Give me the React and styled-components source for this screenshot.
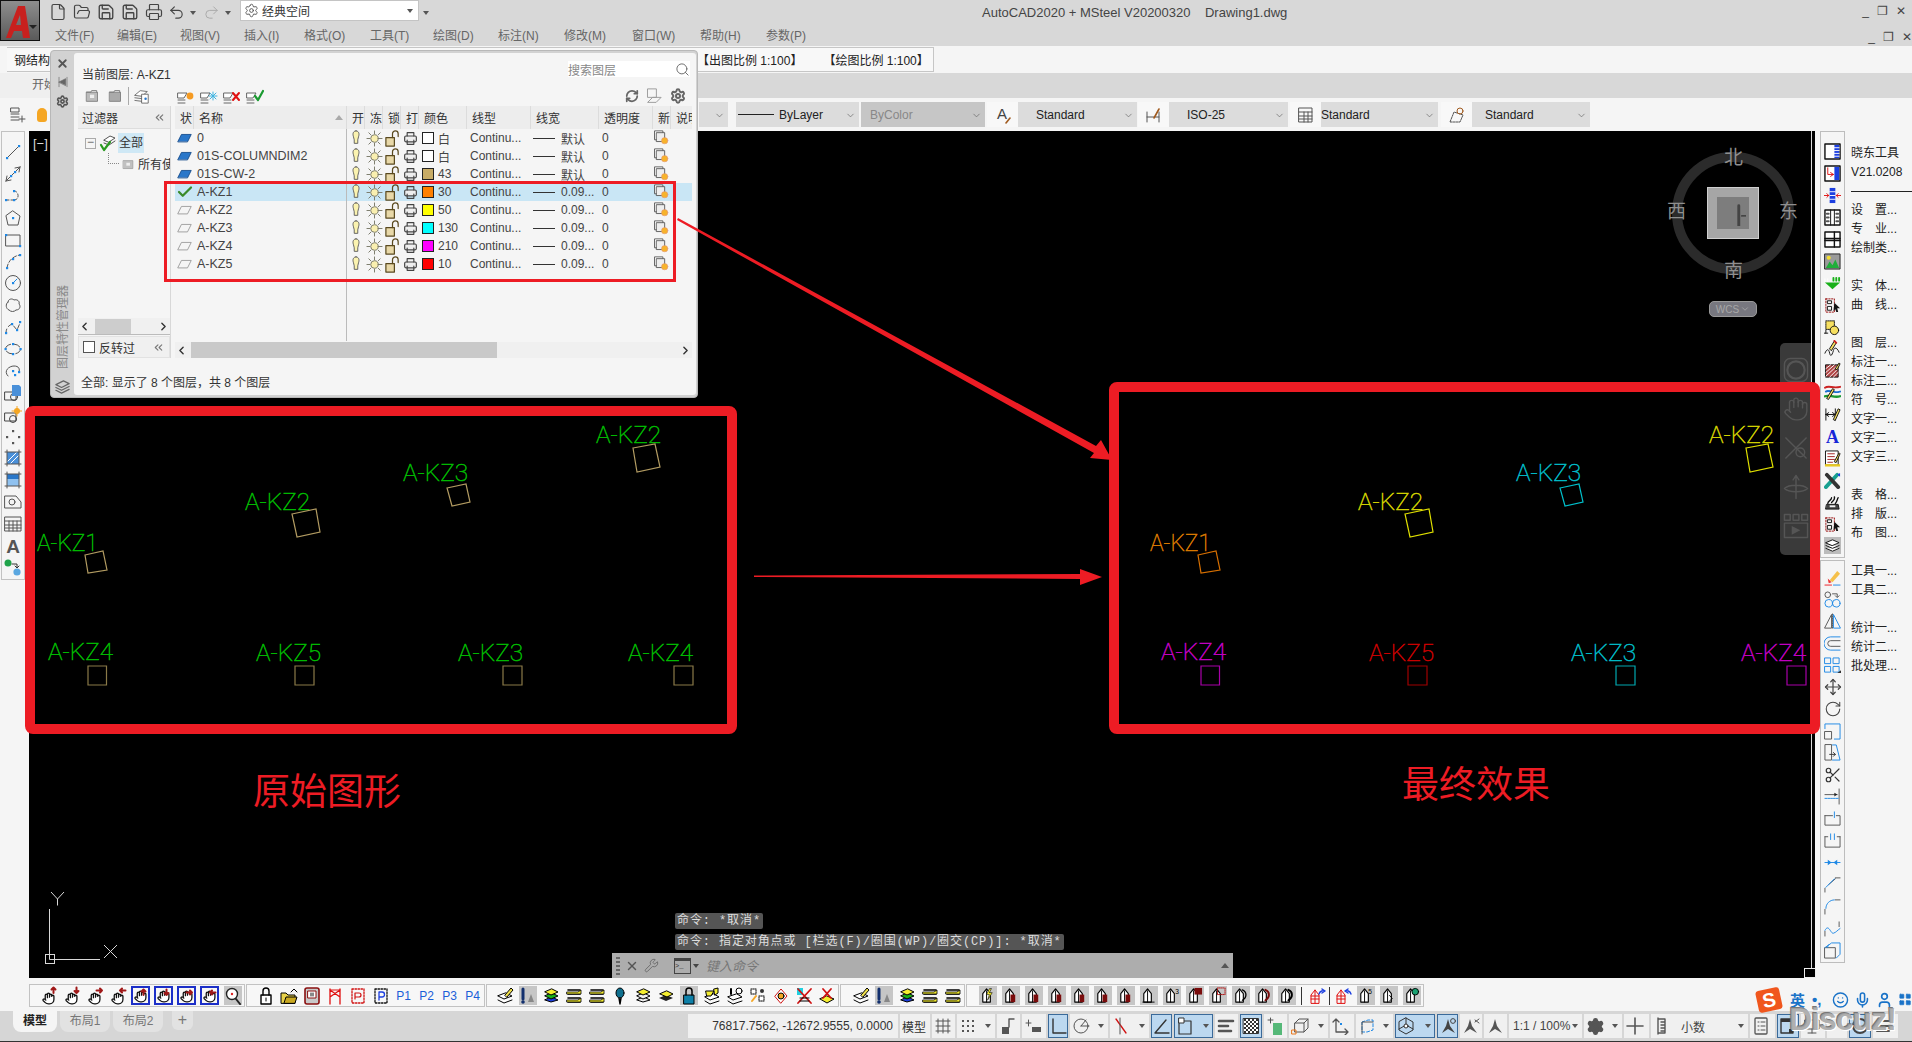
import React from "react";
import styled, { createGlobalStyle } from "styled-components";
import { File, FolderOpen, Save, Printer, Undo2, Redo2, Settings, Search, RefreshCw, Hand, Smile, Mic, User, LayoutGrid, Move, RotateCw, Scissors, Wrench, X, ChevronDown, ChevronsLeft, ChevronLeft, ChevronRight, Check } from "lucide-react";

const GlobalStyle = createGlobalStyle`
  html, body { margin: 0; padding: 0; background: #f5f5f5; }
  body { font-family: "Liberation Sans", "Noto Sans CJK SC", sans-serif; font-size: 12px; color: #333; }
`;

const RED = "#ed1c24";

const Page = styled.div`
  position: relative;
  width: 1912px;
  height: 1042px;
  overflow: hidden;
  display: flex;
  flex-direction: column;
  background: #f5f5f5;
`;

const TopBar = styled.div`
  display: flex;
  height: 45px;
  background: #d8d8d8;
`;

const Logo = styled.div`
  position: relative;
  width: 40px;
  height: 41px;
  flex: none;
  background: linear-gradient(#8e8e8e, #5a5a5a);
  border: 1px solid #111;
  box-sizing: border-box;
  overflow: hidden;
`;

const LogoCaret = styled.i`
  position: absolute;
  right: 2px;
  top: 24px;
  border: 4px solid transparent;
  border-top-color: #222;
`;

const TopStack = styled.div`
  position: relative;
  flex: 1;
  display: flex;
  flex-direction: column;
`;

const QuickRow = styled.div`
  display: flex;
  align-items: center;
  height: 24px;
  padding-left: 6px;
`;

const QuickIcon = styled.span`
  display: inline-flex;
  justify-content: center;
  width: ${(p) => p.$w || 24}px;
  color: #444;
`;

const MiniCaret = styled.i`
  flex: none;
  width: 0;
  height: 0;
  margin: 4px 5px 0 4px;
  border: 3px solid transparent;
  border-top: 4px solid #555;
`;

const WorkspaceBox = styled.div`
  display: flex;
  align-items: center;
  gap: 3px;
  width: 179px;
  height: 21px;
  margin-left: 4px;
  margin-top: -3px;
  padding-left: 3px;
  box-sizing: border-box;
  background: #fff;
  border: 1px solid #c4c4c4;
  color: #333;
  font-size: 12px;

  span { flex: 1; }
`;

const AppTitle = styled.div`
  margin-left: 548px;
  font-size: 13px;
  color: #444;
  white-space: nowrap;
`;

const WinButtons = styled.div`
  position: absolute;
  right: ${(p) => (p.$low ? "0" : "6px")};
  top: ${(p) => (p.$low ? "6px" : "4px")};
  display: flex;
  gap: 8px;
  font-size: 12px;
  color: #444;
`;

const MenuRow = styled.div`
  position: relative;
  height: 21px;
`;

const MenuItem = styled.span`
  position: absolute;
  left: ${(p) => p.$x - 40}px;
  top: 2px;
  font-size: 12px;
  color: #666;
`;

const ScaleRow = styled.div`
  height: 28px;
  padding: 1px 0;
  box-sizing: border-box;
  background: #f5f5f5;
  border-top: 1px solid #d8d8d8;
`;

const ScaleBox = styled.div`
  display: flex;
  align-items: center;
  width: 927px;
  height: 25px;
  margin-left: 7px;
  padding-left: 7px;
  box-sizing: border-box;
  border: 1px solid #c6c6c6;
  border-width: 1px 1px 1px 0;
  background: #f8f8f8;
  color: #222;
  font-size: 12px;
`;

const ScaleText = styled.span`
  margin-left: ${(p) => (p.$gap ? "21px" : "647px")};
  white-space: nowrap;
  font-size: 12px;
`;

const TabRow = styled.div`
  height: 25px;
  background: #d8d8d8;
`;

const StartTab = styled.div`
  width: 64px;
  height: 25px;
  line-height: 25px;
  padding-left: 32px;
  box-sizing: border-box;
  background: #efefef;
  border-radius: 0 0 10px 0;
  color: #666;
  white-space: nowrap;
`;

const PropsRow = styled.div`
  display: flex;
  align-items: center;
  height: 33px;
  background: #f5f5f5;
`;

const PropIconLeft = styled.div`
  margin-left: 10px;
  display: flex;
`;

const Bulb = styled.i`
  width: 10px;
  height: 14px;
  margin-left: 9px;
  background: #f5a623;
  border-radius: 5px 5px 3px 3px;
`;

const PropCombo = styled.div`
  display: flex;
  align-items: center;
  position: relative;
  width: ${(p) => p.$w}px;
  height: 25px;
  margin-left: ${(p) => p.$ml || 0}px;
  background: ${(p) => (p.$off ? "#c6c6c6" : "#dcdcdc")};
  flex: none;
`;

const Caret = styled(ChevronDown).attrs({ size: 11, strokeWidth: 1.5 })`
  position: absolute;
  right: 3px;
  top: 8px;
  color: #666;
`;

const LineSample = styled.i`
  width: 36px;
  height: 1px;
  margin-left: 2px;
  background: #222;
`;

const PropText = styled.span`
  margin-left: ${(p) => p.$pad ?? 5}px;
  color: ${(p) => (p.$off ? "#888" : "#222")};
  font-size: 12px;
`;

const PropTool = styled.div`
  display: flex;
  align-items: center;
  justify-content: center;
  width: 31px;
  height: 25px;
  margin-left: ${(p) => p.$ml || 2}px;
  background: #f8f8f8;
  flex: none;
`;

const Main = styled.div`
  display: flex;
  height: 847px;
  flex: none;
`;

const LeftTools = styled.div`
  flex: none;
  align-self: flex-start;
  width: 24px;
  margin: 0 4px 0 1px;
  border: 1px solid #c2c2c2;
  box-sizing: border-box;
  padding: 9px 0 0;
  height: 449px;
`;

const LeftCell = styled.div`
  display: flex;
  align-items: center;
  justify-content: center;
  height: 21.9px;
`;

const Canvas = styled.div`
  position: relative;
  flex: none;
  width: 1786px;
  height: 847px;
  background: #000;
`;

const CanvasTag = styled.div`
  position: absolute;
  left: 4px;
  top: 5px;
  color: #d8d8d8;
  font-size: 13px;
`;

const DrawingSvg = styled.svg`
  position: absolute;
  inset: 0;
  width: 100%;
  height: 100%;
`;

const Compass = styled.div`
  position: absolute;
  left: 1643px;
  top: 15px;
  width: 122px;
  height: 180px;
`;

const Ring = styled.div`
  position: absolute;
  left: 0;
  top: 6px;
  width: 122px;
  height: 122px;
  box-sizing: border-box;
  border: 10px solid #2b2b2b;
  border-radius: 50%;
`;

const ViewCube = styled.div`
  position: absolute;
  left: 35px;
  top: 41px;
  width: 52px;
  height: 52px;
  box-sizing: border-box;
  display: flex;
  align-items: center;
  justify-content: center;
  background: #a6a6a6;
  border: 1px solid #cfcfcf;
`;

const ViewFace = styled.div`
  width: 32px;
  height: 32px;
  display: flex;
  align-items: center;
  justify-content: center;
  background: #7d7d7d;
`;

const Dir = styled.span`
  position: absolute;
  left: ${(p) => p.$x}px;
  top: ${(p) => p.$y}px;
  font-size: 19px;
  line-height: 24px;
  color: #8f8f8f;
`;

const WcsPill = styled.div`
  position: absolute;
  left: 37px;
  top: 155px;
  width: 48px;
  height: 16px;
  box-sizing: border-box;
  display: flex;
  align-items: center;
  justify-content: center;
  gap: 1px;
  background: #77777f;
  border: 1px solid #9a9a9a;
  border-radius: 5px;
  color: #a8a8a8;
  font-size: 10px;
`;

const NavBar = styled.div`
  position: absolute;
  left: 1751px;
  top: 212px;
  width: 31px;
  height: 212px;
  box-sizing: border-box;
  padding-top: 14px;
  background: #3a3a3a;
  border-radius: 5px 0 0 5px;
  display: flex;
  flex-direction: column;
  gap: 13px;
`;

const NavGlyph = styled.div`
  display: flex;
  justify-content: center;
`;

const HistoryStack = styled.div`
  position: absolute;
  left: 646px;
  top: 782px;
  display: flex;
  flex-direction: column;
  align-items: flex-start;
  gap: 5px;
`;

const HistoryLine = styled.div`
  height: 16px;
  line-height: 16px;
  padding: 0 2px;
  background: #555;
  border-radius: 2px;
  color: #ddd;
  font-family: "Liberation Mono", "Noto Sans CJK SC", monospace;
  font-size: 12px;
  letter-spacing: 0.9px;
  white-space: pre;
`;

const CommandBar = styled.div`
  position: absolute;
  left: 583px;
  top: 822px;
  width: 621px;
  height: 25px;
  display: flex;
  align-items: center;
  gap: 5px;
  padding-left: 4px;
  box-sizing: border-box;
  background: #adadad;
`;

const Grip = styled.i`
  width: 4px;
  height: 18px;
  background: repeating-linear-gradient(#666 0 2px, transparent 2px 4px);
`;

const ConsoleBox = styled.span`
  width: 15px;
  height: 12px;
  margin-left: 10px;
  border: 1px solid #444;
  border-top-width: 3px;
  font-family: "Liberation Mono", monospace;
  font-size: 7px;
  line-height: 10px;
  color: #333;
`;

const CmdCaret = styled.i`
  width: 0;
  margin-left: -3px;
  border: 3px solid transparent;
  border-top: 4px solid #444;
  margin-top: 4px;
`;

const CmdHint = styled.span`
  margin-left: 2px;
  font-style: italic;
  font-size: 13px;
  color: #777;
`;

const UpCaret = styled.i`
  margin-left: auto;
  margin-right: 4px;
  border: 4px solid transparent;
  border-top: 0;
  border-bottom: 5px solid #555;
`;

const CanvasCorner = styled.i`
  position: absolute;
  right: -1px;
  bottom: 0;
  width: 10px;
  height: 8px;
  background: #000;
  border: 1px solid #eee;
`;

const RightPanel = styled.div`
  flex: 1;
  display: flex;
  min-width: 0;
  padding-left: 5px;
`;

const RightTools = styled.div`
  flex: none;
  width: 25px;
`;

const RightBar = styled.div`
  border: 1px solid #bdbdbd;
  box-sizing: border-box;
  padding: ${(p) => p.$pt}px 0 ${(p) => p.$pb}px;
  margin-top: ${(p) => p.$mt || 0}px;
`;

const RightCell = styled.div`
  display: flex;
  align-items: center;
  justify-content: center;
  height: 21.9px;
`;

const LabelColumn = styled.div`
  padding: 13px 0 0 6px;
  flex: 1;
  min-width: 0;
`;

const PanelLabel = styled.div`
  height: 19px;
  line-height: 19px;
  white-space: pre;
  font-size: 12px;
  color: #222;
`;

const LabelRule = styled.div`
  height: 19px;
  box-sizing: border-box;
  border-bottom: 1px solid #222;
  transform: translateY(-9px);
`;

const BottomBar = styled.div`
  display: flex;
  flex: none;
  height: 33px;
  padding-top: 6px;
  box-sizing: border-box;
  gap: 1px;
`;

const IconGroup = styled.div`
  display: flex;
  align-items: center;
  height: 23px;
  padding-left: ${(p) => p.$pl}px;
  margin-left: ${(p) => (p.$first ? "29px" : "0")};
  border: 1px solid #c2c2c2;
  box-sizing: border-box;
  background: #f7f7f7;
`;

const BarCell = styled.div`
  display: flex;
  align-items: center;
  justify-content: center;
  width: 23px;
  height: 21px;
  flex: none;
`;

const BarDivider = styled.i`
  width: 1px;
  height: 18px;
  background: #333;
  margin: 0 ${(p) => p.$m}px;
  flex: none;
`;

const GloveWrap = styled.div`
  position: relative;
  display: flex;
  align-items: flex-end;
  justify-content: center;
  width: 19px;
  height: 19px;
  box-sizing: border-box;
  border: ${(p) => (p.$boxed ? "2px solid #1c2fc8" : "0")};

  svg:last-child {
    position: absolute;
    top: 0;
    right: 0;
  }
`;

const GrayChip = styled.div`
  display: flex;
  align-items: center;
  justify-content: center;
  width: 18px;
  height: 19px;
  background: #c6c6c6;
`;

const PLabel = styled.span`
  color: #1a5fd8;
  font-size: 12px;
`;

const StatusBar = styled.div`
  display: flex;
  flex: none;
  align-items: flex-start;
  height: 30px;
  background: #d6d6d6;
`;

const Tabs = styled.div`
  display: flex;
  width: 688px;
  flex: none;
  padding-left: 13px;
  box-sizing: border-box;
  gap: 3px;
`;

const LayoutTab = styled.div`
  width: ${(p) => (p.$active ? "44px" : "50px")};
  height: 21px;
  line-height: 21px;
  text-align: center;
  background: ${(p) => (p.$active ? "#f5f5f5" : "#e2e2e2")};
  border-radius: 0 0 8px 8px;
  color: ${(p) => (p.$active ? "#222" : "#777")};
  font-weight: ${(p) => (p.$active ? 700 : 400)};
`;

const AddTab = styled.div`
  width: 21px;
  height: 19px;
  line-height: 17px;
  margin-left: 6px;
  text-align: center;
  background: #e2e2e2;
  border-radius: 0 0 6px 6px;
  color: #777;
  font-size: 16px;
`;

const CoordTile = styled.div`
  width: 210px;
  height: 24px;
  margin-top: 3px;
  line-height: 24px;
  flex: none;
  text-align: right;
  padding-right: 5px;
  box-sizing: border-box;
  background: #f0f0f0;
  color: #333;
`;

const TileRow = styled.div`
  display: flex;
  gap: 2px;
  margin: 3px 0 0 2px;
`;

const Tile = styled.div`
  position: relative;
  flex: none;
  display: flex;
  align-items: center;
  justify-content: flex-start;
  padding-left: 2px;
  box-sizing: border-box;
  width: ${(p) => p.$w}px;
  height: 24px;
  background: ${(p) => (p.$hl ? "#bcd8f0" : "#f0f0f0")};
  box-shadow: ${(p) => (p.$hl ? "inset 0 0 0 1px #3a6a9a" : "none")};
  color: #333;
  white-space: nowrap;
  overflow: hidden;
`;

const TileCaret = styled.i`
  position: absolute;
  right: 4px;
  top: 10px;
  border: 3px solid transparent;
  border-top: 4px solid #555;
`;

const ScaleLabel = styled.span`
  margin-left: 2px;
  color: #444;
  font-size: 12px;
`;

const UnitsLabel = styled.span`
  margin-left: 10px;
  color: #444;
`;

const Baseline = styled.div`
  flex: 1;
  background: #333;
`;

const Dialog = styled.div`
  position: absolute;
  left: 50px;
  top: 50px;
  width: 648px;
  height: 348px;
  display: flex;
  background: #d2d2d2;
  border: 1px solid #b8b8b8;
  border-radius: 4px;
  box-sizing: border-box;
  z-index: 2;
`;

const DialogStrip = styled.div`
  flex: none;
  width: 23px;
  padding-top: 5px;
  display: flex;
  flex-direction: column;
  align-items: center;
  gap: 5px;
`;

const StripIcon = styled.div`
  display: flex;
  height: 14px;
  align-items: center;
  color: #555;
  margin-top: ${(p) => (p.$end ? "5px" : "0")};
  margin-bottom: ${(p) => (p.$end ? "4px" : "0")};
`;

const StripTitle = styled.div`
  margin-top: auto;
  writing-mode: vertical-rl;
  text-orientation: sideways;
  transform: rotate(180deg);
  color: #8a8a8a;
  font-size: 12px;
  line-height: 14px;
  white-space: nowrap;
`;

const DialogBody = styled.div`
  flex: 1;
  display: flex;
  flex-direction: column;
  margin: 2px 1px 2px 0;
  background: #f5f5f5;
  border-radius: 3px;
  padding: 0 4px;
  min-width: 0;
`;

const DialogHead = styled.div`
  display: flex;
  align-items: center;
  justify-content: space-between;
  height: 32px;
  padding-left: 4px;
`;

const CurrentLayer = styled.span`
  margin-top: 8px;
  color: #333;
`;

const SearchBox = styled.div`
  display: flex;
  align-items: center;
  justify-content: space-between;
  width: 122px;
  height: 16px;
  margin-right: 2px;
  background: #fff;
  color: #888;
`;

const DialogTools = styled.div`
  display: flex;
  align-items: center;
  height: 21px;
  padding-left: 3px;
`;

const ToolGlyph = styled.span`
  display: inline-flex;
  justify-content: center;
  width: ${(p) => p.$w}px;
`;

const ToolSep = styled.i`
  width: 1px;
  height: 18px;
  background: #aaa;
  margin: 0 1px;
`;

const ToolSpacer = styled.i`
  width: 20px;
`;

const ToolRight = styled.div`
  display: flex;
  align-items: center;
  gap: 7px;
  margin-left: auto;
  margin-right: 6px;
`;

const Panels = styled.div`
  display: flex;
  gap: 4px;
  height: 252px;
`;

const FilterPanel = styled.div`
  display: flex;
  flex-direction: column;
  flex: none;
  width: 93px;
  border-right: 1px solid #d8d8d8;
  box-sizing: border-box;
`;

const FilterHead = styled.div`
  display: flex;
  align-items: center;
  justify-content: space-between;
  height: 22px;
  padding: 0 4px;
  background: #ededed;
  border-bottom: 1px solid #ddd;
  flex: none;
`;

const FilterTree = styled.div`
  flex: 1;
  overflow: hidden;
`;

const TreeRow = styled.div`
  display: flex;
  align-items: center;
  height: 20px;
  margin-top: 4px;
  padding-left: 7px;
`;

const TreeBox = styled.i`
  width: 9px;
  height: 9px;
  margin-right: 2px;
  border: 1px solid #aaa;
  font-style: normal;
  line-height: 7px;
  text-align: center;
  color: #666;
`;

const TreeSel = styled.span`
  margin-left: 2px;
  padding: 0 1px;
  line-height: 20px;
  background: #cfe8f5;
`;

const TreeChild = styled.div`
  display: flex;
  align-items: center;
  gap: 3px;
  height: 20px;
  margin-left: 30px;
  white-space: nowrap;
  overflow: hidden;

  &::before {
    content: "";
    flex: none;
    width: 10px;
    height: 10px;
    margin-top: -10px;
    border-left: 1px dotted #888;
    border-bottom: 1px dotted #888;
  }

  svg { flex: none; }
`;

const MiniScroll = styled.div`
  display: flex;
  align-items: center;
  justify-content: space-between;
  height: 16px;
  flex: none;
  margin-bottom: 1px;
  background: #f0f0f0;
  border-bottom: 1px solid #bbb;
`;

const MiniThumb = styled.i`
  width: 36px;
  height: 15px;
  margin-right: 25px;
  margin-left: 2px;
  background: #cdcdcd;
`;

const InvertRow = styled.div`
  display: flex;
  align-items: center;
  gap: 4px;
  height: 20px;
  padding: 0 4px;
  background: #f0f0f0;
  border: 1px solid #e2e2e2;
  flex: none;

  span { flex: 1; }
`;

const InvertBox = styled.i`
  width: 12px;
  height: 12px;
  background: #fff;
  border: 1px solid #555;
  box-sizing: border-box;
`;

const TablePanel = styled.div`
  position: relative;
  flex: none;
  width: 517px;
`;

const columns = "19px 153px 18px 18px 18px 18px 48px 64px 68px 54px 18px 21px";

const HeadRow = styled.div`
  display: grid;
  grid-template-columns: ${columns};
  height: 23px;
  background: #ededed;
`;

const HeadCell = styled.div`
  position: relative;
  display: flex;
  align-items: center;
  padding-left: 5px;
  overflow: hidden;
  white-space: nowrap;
  border-right: ${(p) => (p.$last ? "0" : "1px solid #dcdcdc")};
  color: #333;
`;

const SortMark = styled.i`
  position: absolute;
  right: 3px;
  top: 9px;
  border: 4px solid transparent;
  border-top: 0;
  border-bottom: 5px solid #aaa;
`;

const LayerRow = styled.div`
  display: grid;
  grid-template-columns: ${columns};
  height: 18px;
  background: ${(p) => (p.$sel ? "#c9e6f5" : "transparent")};
`;

const Cell = styled.div`
  display: flex;
  align-items: center;
  justify-content: ${(p) => (p.$c ? "center" : "flex-start")};
`;

const NameCell = styled.div`
  display: flex;
  align-items: center;
  padding-left: 3px;
  color: #444;
  border-right: 1px solid #bbb;
  font-size: 12.5px;
`;

const ColorCell = styled.div`
  display: flex;
  align-items: center;
  gap: 4px;
  padding-left: 3px;
  color: #444;
`;

const Swatch = styled.i`
  flex: none;
  width: 12px;
  height: 12px;
  box-sizing: border-box;
  background: ${(p) => p.$c};
  border: 1px solid #222;
`;

const TextCell = styled.div`
  display: flex;
  align-items: center;
  padding-left: 3px;
  color: #444;
`;

const WidthCell = styled.div`
  display: flex;
  align-items: center;
  gap: 6px;
  padding-left: 2px;
  color: #444;
`;

const WidthLine = styled.i`
  width: 22px;
  height: 1px;
  background: #333;
  flex: none;
`;

const NameDivider = styled.div`
  height: 68px;
  margin-left: 171px;
  border-left: 1px solid #bbb;
`;

const MainScroll = styled.div`
  display: flex;
  align-items: center;
  justify-content: space-between;
  height: 16px;
  margin-top: 1px;
  background: #f0f0f0;
`;

const MainThumb = styled.i`
  width: 306px;
  height: 16px;
  margin-left: 3px;
  margin-right: auto;
  background: #c9c9c9;
`;

const FootText = styled.div`
  margin-top: 15px;
  padding-left: 3px;
  color: #333;
`;

const RowsMarker = styled.div`
  position: absolute;
  left: 113px;
  top: 130px;
  width: 512px;
  height: 101px;
  box-sizing: border-box;
  border: 3px solid ${RED};
`;

const Annotations = styled.svg`
  position: absolute;
  left: 0;
  top: 0;
  width: 1912px;
  height: 1042px;
  z-index: 3;
  pointer-events: none;
`;

const Caption = styled.div`
  position: absolute;
  left: ${(p) => p.$x}px;
  top: ${(p) => p.$y}px;
  z-index: 3;
  color: ${RED};
  font-family: "Noto Sans CJK SC", serif;
  font-size: 37px;
  line-height: 42px;
  white-space: nowrap;
`;

const ImeBar = styled.div`
  position: absolute;
  left: 1757px;
  top: 986px;
  z-index: 4;
  display: flex;
  align-items: center;
  gap: 5px;
  width: 155px;
  height: 27px;
  color: #1a73c8;
`;

const SogouMark = styled.div`
  flex: none;
  width: 24px;
  height: 22px;
  margin-right: 4px;
  transform: rotate(-12deg);
  background: #f0561d;
  border-radius: 3px;
  color: #fff;
  font: 700 20px/22px "Liberation Sans", sans-serif;
  text-align: center;
`;

const ImeText = styled.span`
  width: ${(p) => (p.$small ? "16px" : "18px")};
  font-size: 15px;
  font-weight: 700;
  color: #1a73c8;
`;

const Watermark = styled.div`
  position: absolute;
  left: 1789px;
  top: 1000px;
  z-index: 5;
  font-family: "Liberation Sans", sans-serif;
  font-size: 32px;
  line-height: 38px;
  font-weight: 700;
  letter-spacing: -1px;
  color: rgba(165, 165, 165, 0.9);
  text-shadow: 1px 1px 0 #fff, -1px -1px 0 #777;
`;

const I = ({ s = 18, children }) => (
  <svg width={s} height={s} viewBox="0 0 18 18" fill="none" strokeLinecap="round" strokeLinejoin="round">
    {children}
  </svg>
);

const Dot = ({ x, y, c = "#1e88e5" }) => <rect x={x - 1} y={y - 1} width="2.2" height="2.2" fill={c} />;

/* left draw toolbar */
const leftIcons = [
  <><path d="M3 15 15 3" stroke="#555" /><Dot x={3} y={15} /><Dot x={15} y={3} /></>,
  <><path d="M2 16 16 2M2 16l1-5M2 16l5-1M16 2l-1 5M16 2l-5 1" stroke="#555" /><Dot x={7} y={11} /><Dot x={11} y={7} /></>,
  <><path d="M2 13h8M10 4c5 0 6 9 0 9" stroke="#555" strokeDasharray="3 2" /><Dot x={2} y={13} /><Dot x={10} y={13} /><Dot x={10} y={4} /></>,
  <><path d="M9 2 16 7l-2 9H4L2 7Z" stroke="#555" /><Dot x={9} y={9} /></>,
  <><rect x="2" y="4" width="14" height="11" stroke="#555" /><Dot x={2} y={4} /><Dot x={16} y={15} /></>,
  <><path d="M3 16C4 9 9 4 16 3" stroke="#555" strokeDasharray="4 2" /><Dot x={3} y={16} /><Dot x={9} y={7} /><Dot x={16} y={3} /></>,
  <><circle cx="9" cy="9" r="7.5" stroke="#555" /><path d="M9 9l4-4" stroke="#1e88e5" /><Dot x={9} y={9} /></>,
  <path d="M4 6c0-3 4-4 6-2 3-1 6 1 5 4 2 2 1 6-3 6-2 2-5 2-7 0C2 13 1 8 4 6Z" stroke="#555" />,
  <><path d="M2 15c0-6 4-8 6-9l5 6 3-7" stroke="#555" strokeDasharray="4 3" /><Dot x={2} y={15} /><Dot x={8} y={6} /><Dot x={13} y={12} /><Dot x={16} y={4} /></>,
  <><ellipse cx="9" cy="9" rx="7.5" ry="5" stroke="#555" strokeDasharray="7 3" /><Dot x={1.5} y={9} /><Dot x={16.5} y={9} /><Dot x={9} y={4} /><Dot x={9} y={14} /></>,
  <><path d="M4 14C-1 9 5 4 10 4s6 3 5 6" stroke="#555" /><Dot x={9} y={9} /><Dot x={15} y={10} /><Dot x={11} y={13} /></>,
  <><rect x="1" y="8" width="11" height="8" stroke="#444" /><circle cx="10" cy="13" r="3.5" stroke="#444" /><path d="M8 1h7l2 2v9H8Z" fill="#4a90d9" /></>,
  <><rect x="1" y="7" width="11" height="8" stroke="#444" /><circle cx="9" cy="13" r="3.5" stroke="#444" /><circle cx="13" cy="5" r="3" fill="#f5a623" /><path d="M13 0v10M8 5h10" stroke="#f5a623" /></>,
  <><Dot x={9} y={3} c="#555" /><Dot x={3} y={9} c="#555" /><Dot x={15} y={9} c="#555" /><Dot x={9} y={15} c="#555" /></>,
  <><rect x="3" y="3" width="12" height="12" fill="#4a90d9" /><path d="M1 3h16M1 15h16M3 1v16M15 1v16" stroke="#555" /><path d="M4 12 12 4M7 14l7-7" stroke="#fff" /></>,
  <><rect x="3" y="3" width="12" height="12" fill="#8fc1ef" /><rect x="3" y="3" width="12" height="5" fill="#2a77c9" /><path d="M1 3h16M1 15h16M3 1v16M15 1v16" stroke="#555" /></>,
  <><path d="M1 3h11l5 6v6H1Z" stroke="#555" /><circle cx="8" cy="9" r="3" stroke="#555" /></>,
  <><rect x="1" y="2" width="16" height="14" stroke="#555" /><path d="M1 6h16M1 10h16M1 13h16M5 6v10M9 6v10M13 6v10" stroke="#555" /></>,
  <text x="9" y="16" textAnchor="middle" fontSize="19" fontWeight="700" fill="#555" fontFamily="Liberation Sans">A</text>,
  <><circle cx="4" cy="4" r="3.5" fill="#1fa34a" /><path d="M8 5h5v3M11 7l2 2 2-2" stroke="#333" /><circle cx="13" cy="13" r="3.6" fill="#5aa7e0" /></>,
];

/* right toolbars */
const rightIconsA = [
  <><rect x="1" y="1" width="16" height="16" fill="#fff" stroke="#111" strokeWidth="1.5" /><rect x="11" y="2" width="5" height="14" fill="#1c3fe0" /><path d="M11 5h5M11 8h5M11 11h5M11 14h5" stroke="#fff" /></>,
  <><rect x="1" y="1" width="16" height="16" fill="#fff" stroke="#111" strokeWidth="1.5" /><rect x="11" y="2" width="5" height="14" fill="#1c3fe0" /><path d="M4 3v7h6M7 8l3 2-3 2" stroke="#e01010" /></>,
  <><rect x="6" y="1" width="6" height="16" fill="#1c3fe0" /><path d="M6 5h6M6 9h6M6 13h6" stroke="#fff" /><path d="M0 9h5M13 9h5M3 7l2 2-2 2M15 7l-2 2 2 2" stroke="#e01010" /></>,
  <><rect x="1" y="1" width="16" height="16" fill="#fff" stroke="#111" strokeWidth="1.5" /><path d="M7 1v16M11 1v16" stroke="#111" /><path d="M3 5h2M3 9h2M3 13h2M13 5h2M13 9h2M13 13h2" stroke="#555" strokeWidth="2" /></>,
  <><rect x="1" y="1" width="16" height="16" fill="#fff" stroke="#111" strokeWidth="1.5" /><path d="M1 8h16M1 10h16M11 1v16" stroke="#111" strokeWidth="1.5" /></>,
  <><rect x="1" y="1" width="16" height="16" fill="#9a9a9a" stroke="#222" /><path d="M2 16l4-7 3 4 3-6 4 9Z" fill="#1fae3a" /><circle cx="5" cy="5" r="2.2" fill="#f3dd2e" /></>,
  <><path d="M1 8h16L9 15Z" fill="#18b018" /><path d="M1 4v3M4 4v3" stroke="#fff" /><path d="M10 3v3M13 3v3M16 3v3" stroke="#18b018" strokeWidth="2" /></>,
  <><rect x="2" y="2" width="9" height="14" stroke="#9a1010" strokeDasharray="1.5 1.5" /><rect x="4" y="4" width="4" height="3" stroke="#111" /><rect x="4" y="10" width="4" height="4" stroke="#111" /><path d="M11 6l6 6-3 0 1 4-2 0-1-3-2 2Z" fill="#111" /></>,
  <><rect x="2" y="2" width="9" height="9" fill="#f7e060" stroke="#111" strokeDasharray="1 1" /><circle cx="11" cy="12" r="4.5" fill="#f7e060" stroke="#111" /><path d="M2 12v3M0 15h4" stroke="#111" /></>,
  <><path d="M1 14c2-5 4-5 5 0s3 1 4-3 4-3 6 2" stroke="#111" /><path d="M6 9 11 1l2 2-5 8Z" fill="#f7e060" stroke="#111" /><path d="M11 1l2 2" stroke="#c22" strokeWidth="2" /></>,
  <><rect x="2" y="3" width="13" height="13" fill="#b04545" stroke="#111" /><path d="M2 7l5-4M2 11l9-8M2 15 15 3M6 16l9-9M10 16l5-5" stroke="#fff" /><path d="M12 7 16 1l1 1-3 6Z" fill="#f7e060" stroke="#111" /></>,
  <><path d="M1 4c4-3 8 1 16-1" stroke="#c22" strokeWidth="2" /><path d="M2 8c4-2 10 2 15 0" stroke="#1a6fd0" strokeWidth="2" strokeDasharray="2 1" /><path d="M1 13c4-2 10 2 16 0" stroke="#1a9a30" strokeWidth="2.4" /><path d="M3 15 9 5l2 1-6 10Z" fill="#f7e060" stroke="#111" /></>,
  <><path d="M2 3v12M12 3v12M2 9h10M2 9l3-2M2 9l3 2M12 9l-3-2M12 9l-3 2" stroke="#111" /><path d="M10 14 15 3l2 1-5 11Z" fill="#f7e060" stroke="#111" /></>,
  <text x="9" y="16" textAnchor="middle" fontSize="19" fontWeight="700" fill="#1626d8" fontFamily="Liberation Serif">A</text>,
  <><rect x="2" y="1" width="13" height="15" fill="#fff" stroke="#111" /><path d="M4 4h7M4 7h7M4 10h7M4 13h5" stroke="#a02020" /><rect x="1" y="15" width="16" height="2.5" fill="#e8c820" /><path d="M11 12 16 3l1 1-4 9Z" fill="#f7e060" stroke="#111" /></>,
  <><path d="M2 16 14 3" stroke="#18a090" strokeWidth="4" /><path d="M3 3l12 13" stroke="#333" strokeWidth="4" /><path d="M14 3l3-2v4Z" fill="#1c3fe0" /></>,
  <><path d="M3 11h12l1 5H2Z" fill="#444" stroke="#111" /><rect x="6" y="12" width="6" height="2" fill="#eee" /><path d="M4 10c0-3 4-3 4-6M8 9c2-2 4-3 3-6M12 10c2-2 2-5 3-6" stroke="#111" strokeWidth="1.4" /></>,
  <><rect x="2" y="2" width="9" height="14" stroke="#9a1010" strokeDasharray="1.5 1.5" /><rect x="4" y="4" width="4" height="3" stroke="#111" /><rect x="4" y="10" width="4" height="4" stroke="#111" /><path d="M11 6l6 6-3 0 1 4-2 0-1-3-2 2Z" fill="#111" /></>,
  <><rect x="0" y="0" width="18" height="18" fill="#bbb" /><path d="M2 6 9 3l7 3-7 3ZM2 9l7 3 7-3M2 12l7 3 7-3" fill="#fff" stroke="#111" /></>,
];

const B = "#1e88e5";
const G = "#555";
const rightIconsB = [
  <><path d="M6 12 14 2l3 3-8 9Z" fill="#f5c04a" /><path d="M4 10l4 4-3 1Z" fill="#e33" /><path d="M1 17h7" stroke={RED} /><path d="M10 17h7" stroke={B} /></>,
  <><circle cx="4" cy="4" r="3" stroke={G} /><path d="M9 3h5v3M12 5l2 2 2-2" stroke={G} /><circle cx="5" cy="13" r="4" stroke={B} /><circle cx="13" cy="13" r="4" stroke={B} /></>,
  <><path d="M8 2v14H1Z" stroke={G} /><path d="M9 1v16" stroke={G} strokeDasharray="1 1" /><path d="M10 2v14h7Z" stroke={B} /></>,
  <><path d="M17 2H7a6 6 0 0 0 0 14h10" stroke={B} /><path d="M17 6H7a3 3 0 0 0 0 6h10" stroke={G} /></>,
  <><rect x="1" y="1" width="6" height="6" stroke={B} /><rect x="10" y="1" width="6" height="6" stroke={B} /><rect x="1" y="10" width="6" height="6" stroke={B} /><rect x="10" y="10" width="6" height="6" stroke={B} /><path d="M14 17h4v-3Z" fill="#333" /></>,
  null,
  null,
  <><rect x="1" y="9" width="7" height="8" stroke={G} /><path d="M1 6V1h16v16h-6" stroke={B} /></>,
  <><path d="M1 1v16h7V1Z" stroke={G} /><path d="M9 1h4l4 16H9" stroke={B} /><path d="M6 11h6M10 9l2 2-2 2" stroke="#333" /></>,
  null,
  <><path d="M16 1v16" stroke={G} /><path d="M1 7h13" stroke={G} /><path d="M1 11h14" stroke={B} strokeDasharray="2 1" /><path d="M11 5l3 2-3 2Z" fill="#222" /></>,
  <><path d="M1 6h8M13 6h4v10H1V6" stroke={G} /><path d="M11 2v6" stroke={B} /></>,
  <><path d="M1 5v11h16V5M1 5h3M14 5h3" stroke={G} /><path d="M7 2v6M11 2v6" stroke={B} /></>,
  <><path d="M1 9h16" stroke={B} /><path d="M4 6l4 3-4 3ZM14 6l-4 3 4 3Z" fill={B} /></>,
  <><path d="M1 17v-4M5 9l7-6M12 2h5" stroke={G} /><path d="M2 12 11 3" stroke={B} /></>,
  <><path d="M1 17v-5M12 2h5" stroke={G} /><path d="M2 11c0-5 4-9 9-9" stroke={B} /></>,
  <><path d="M1 17v-5M16 2v5" stroke={G} /><path d="M1 11c4-8 6 4 9 3s4-3 7-5" stroke={B} /></>,
  <><rect x="1" y="6" width="11" height="11" stroke={G} /><path d="M4 6V4l4-3h9v12l-4 4" stroke={B} /><path d="M1 6l4-3" stroke={B} /></>,
];

const moreIcons = { 5: <Move size={18} color="#444" strokeWidth={1.6} />, 6: <RotateCw size={18} color="#444" strokeWidth={1.4} />, 9: <Scissors size={18} color="#333" strokeWidth={1.6} /> };

/* bottom toolbar glyphs */
const glove = (arrow, boxed) => (
  <GloveWrap $boxed={boxed}>
    <Hand size={13} color="#111" strokeWidth={2.4} fill="#fff" />
    <I s={9}><path d={arrow} stroke="#a01818" strokeWidth="4" /></I>
  </GloveWrap>
);

const stack = (top, mid, low) => (
  <I>
    <path d="M3 13 9 15l7-2-6-3Z" fill={low} stroke="#000" />
    <path d="M3 9l6 3 7-3-6-3Z" fill={mid} stroke="#000" />
    <path d="M3 5l6 3 7-3-6-3Z" fill={top} stroke="#000" />
  </I>
);

const layerMark = (mark) => (
  <I>
    <path d="M2 10l5 3 9-3-5-3Z" fill="#fff" stroke="#000" />
    <path d="M2 14l5 3 9-3" stroke="#000" />
    {mark}
  </I>
);

const pencilLayer = (
  <I>
    <path d="M2 9l6 3 8-3-6-3ZM2 13l6 3 8-3" fill="#fff" stroke="#000" />
    <path d="M9 8l6-7 2 2-6 7Z" fill="#f2e24a" stroke="#000" />
  </I>
);

const stripes = (
  <I>
    <path d="M3 3h12M3 7h12M3 11h12M3 15h12" stroke="#000" strokeWidth="1.6" />
    <path d="M2 5h11l3-2v4H2ZM2 13h11l3-2v4H2Z" fill="#f5ee30" stroke="#000" strokeWidth=".8" />
  </I>
);

const houseIcon = (mark) => (
  <GrayChip>
    <I s={17}>
      <path d="M4 16V7l4-5 4 5v9Z" fill="#fff" stroke="#000" strokeWidth="1.2" />
      <path d="M8 4v12" stroke="#000" />
      {mark}
    </I>
  </GrayChip>
);

const group1 = [
  glove("M9 14V3M5 7l4-4 4 4"), glove("M9 3v11M5 10l4 4 4-4"), glove("M3 9h11M10 5l4 4-4 4"), glove("M15 9H4M8 5 4 9l4 4"),
  glove("M9 14V3M5 7l4-4 4 4", true), glove("M9 3v11M5 10l4 4 4-4", true), glove("M3 9h11M10 5l4 4-4 4", true), glove("M15 9H4M8 5 4 9l4 4", true),
  <GrayChip><I><circle cx="8" cy="7" r="5.5" fill="#fff" stroke="#222" strokeWidth="1.4" /><path d="M12 12l4 5" stroke="#222" strokeWidth="2" /><circle cx="8" cy="7" r="1.2" fill="#d22" /></I></GrayChip>,
];

const group2 = [
  <I><rect x="4" y="8" width="10" height="9" fill="#fff" stroke="#000" strokeWidth="1.4" /><path d="M6 8V4a3 3 0 0 1 6 0v4" stroke="#000" strokeWidth="1.4" /><path d="M9 11v3" stroke="#000" /></I>,
  <I><path d="M1 16V6h5l2 2h7v8Z" fill="#e8d24a" stroke="#000" /><path d="M4 16l2-6h11l-2 6Z" fill="#c9a820" stroke="#000" /><path d="M11 5l3-3 3 3" stroke="#000" /></I>,
  <I><rect x="2" y="1" width="14" height="16" rx="2" fill="#c9c9c9" stroke="#8a1010" strokeWidth="1.6" /><rect x="5" y="4" width="8" height="7" fill="#fff" stroke="#8a1010" /><path d="M8 6v3M10 6v3" stroke="#111" /></I>,
  <I><path d="M4 2v15M14 2v15M4 3l10 7M14 3 4 10" stroke="#e01010" strokeWidth="1.3" /><path d="M4 3h10" stroke="#e01010" /></I>,
  <I><rect x="3" y="2" width="12" height="14" stroke="#d01010" strokeDasharray="1.5 1.5" strokeWidth="1.3" /><path d="M6 12V6h4a2 2 0 0 1 0 4H6" stroke="#d01010" strokeWidth="1.2" /></I>,
  <I><rect x="3" y="2" width="12" height="14" stroke="#111" strokeDasharray="1.5 1.5" strokeWidth="1.3" /><path d="M7 13V5h3a2 2 0 0 1 0 5H7" stroke="#1c3fe0" strokeWidth="1.3" /></I>,
  <PLabel>P1</PLabel>, <PLabel>P2</PLabel>, <PLabel>P3</PLabel>, <PLabel>P4</PLabel>,
];

const group3 = [
  pencilLayer,
  <GrayChip><I><path d="M4 2v10" stroke="#13306e" strokeWidth="3" /><circle cx="4" cy="15" r="1.8" fill="#13306e" /><path d="M9 15l3-8 3 8Z" fill="#888" /></I></GrayChip>,
  stack("#f5ee30", "#18b018", "#1c3fe0"),
  stripes,
  stripes,
  <I><ellipse cx="9" cy="6" rx="4" ry="5" fill="#0e6f8e" stroke="#000" /><path d="M8 11l1 6 1-6" stroke="#000" strokeWidth="1.5" /></I>,
  stack("#f5ee30", "#eee", "#eee"),
  <I><path d="M2 11l7 3 7-3-7-3Z" fill="#222" /><path d="M3 7l7 3 6-3-6-3Z" fill="#f5ee30" stroke="#000" /></I>,
  <GrayChip><I><rect x="4" y="8" width="10" height="9" fill="#0e80a8" stroke="#000" /><path d="M6 8V4a3 3 0 0 1 6 0v4" stroke="#000" strokeWidth="1.5" /></I></GrayChip>,
  layerMark(<path d="M3 4h8l-3 5H4Z M11 2l4-1v5l-3 2Z" fill="#f5ee30" stroke="#000" />),
  layerMark(<><circle cx="13" cy="4" r="3" stroke="#000" fill="#fff" /><path d="M5 2v5" stroke="#000" strokeWidth="2" /></>),
  <I><rect x="2" y="2" width="5" height="5" fill="#fff" stroke="#000" strokeDasharray="1 1" /><rect x="10" y="9" width="5" height="5" fill="#fff" stroke="#000" strokeDasharray="1 1" /><path d="M3 14l4-5" stroke="#f5a623" strokeWidth="2" /><circle cx="13" cy="4" r="2" fill="#333" /></I>,
  <I><path d="M3 9l6-7 6 7-6 7Z" fill="#fff" stroke="#d01010" /><circle cx="9" cy="9" r="3" fill="#f5a623" stroke="#000" /></I>,
  <I><rect x="2" y="1" width="6" height="7" fill="#20d0e0" /><path d="M3 2l13 14M16 2 3 16" stroke="#d01010" strokeWidth="1.8" /><path d="M5 11h9M5 14h9" stroke="#000" /></I>,
  <I><path d="M2 12l7 4 7-4-7-3Z" fill="#f5ee30" stroke="#000" /><path d="M5 2l8 9M13 2l-8 9" stroke="#d01010" strokeWidth="1.8" /></I>,
];

const group4 = [group3[0], group3[1], group3[2], stripes, stripes];

const houseBlock = <path d="M9 8h5v8H9Z" fill="#7a0c0c" />;
const group5 = [
  houseIcon(<path d="M11 2 8 8h3l-2 6 5-8h-3l2-4Z" fill="#f5ee30" stroke="#000" strokeWidth=".6" />),
  ...[0, 1, 2, 3, 4, 5].map(() => houseIcon(houseBlock)),
  houseIcon(<path d="M3 16h12" stroke="#000" />),
  houseIcon(<text x="13" y="7" fontSize="7" fill="#000" fontFamily="Liberation Sans">3</text>),
  houseIcon(<rect x="9" y="1" width="8" height="7" fill="#7a0c0c" />),
  houseIcon(<rect x="9" y="1" width="8" height="7" stroke="#b01010" strokeDasharray="1 1" />),
  houseIcon(<path d="M11 3c5 2 5 8 0 11" stroke="#000" strokeWidth="1.4" />),
  houseIcon(<path d="M11 3c5 2 5 8 0 11" stroke="#7a0c0c" strokeWidth="2" />),
  houseIcon(<path d="M11 3c5 2 5 8 0 11" stroke="#000" strokeWidth="2" />),
];

const redHouse = (mark) => (
  <I>
    <path d="M3 16V8l4-5 4 5v8ZM3 9h8M3 12h8M7 3v13" stroke="#e01010" />
    {mark}
  </I>
);

const group6 = [
  houseIcon(<text x="12" y="7" fontSize="7" fill="#000" fontFamily="Liberation Sans">5</text>),
  houseIcon(<path d="M10 9l3 3-3 3" stroke="#000" />),
  houseIcon(<circle cx="13" cy="5" r="3.5" fill="#18a070" stroke="#000" />),
];

function CheckerBox() {
  const cells = [];
  for (let y = 0; y < 7; y++) for (let x = 0; x < 7; x++) if ((x + y) % 2 === 0) cells.push(<rect key={x + "-" + y} x={2 + x * 2} y={2 + y * 2} width="2" height="2" fill="#333" />);
  return <I><rect x="1.5" y="1.5" width="15" height="15" fill="#fff" stroke="#333" />{cells}</I>;
}

/* status tiles, widths taken so each one starts where the reference does */
const ST = "#555";
const T = ({ children }) => <I s={18}>{children}</I>;
const tiles = [
  { w: 30, label: "模型" },
  { w: 23, ico: <T><path d="M4 2v14M9 2v14M14 2v14M2 4h14M2 9h14M2 14h14" stroke={ST} /></T> },
  { w: 38, caret: true, ico: <T><g fill={ST}><rect x="3" y="3" width="2" height="2" /><rect x="8" y="3" width="2" height="2" /><rect x="13" y="3" width="2" height="2" /><rect x="3" y="8" width="2" height="2" /><rect x="8" y="8" width="2" height="2" /><rect x="13" y="8" width="2" height="2" /><rect x="3" y="13" width="2" height="2" /><rect x="8" y="13" width="2" height="2" /><rect x="13" y="13" width="2" height="2" /></g></T> },
  { w: 23, ico: <T><rect x="3" y="10" width="7" height="7" fill={ST} /><path d="M10 10V2h5" stroke={ST} strokeWidth="1.4" /></T> },
  { w: 24, ico: <T><path d="M2 6h5M4.5 3v6" stroke={ST} /><rect x="8" y="10" width="9" height="5" fill={ST} /></T> },
  { w: 20, hl: true, ico: <T><path d="M3 2v14h13" stroke="#333" strokeWidth="1.4" /></T> },
  { w: 38, caret: true, ico: <T><circle cx="9" cy="9" r="7" stroke={ST} /><path d="M9 9h8M9 9l5-6" stroke={ST} /></T> },
  { w: 39, caret: true, ico: <T><path d="M4 2l10 14" stroke="#d01010" strokeWidth="1.3" /><path d="M8 1v16" stroke={ST} /></T> },
  { w: 21, hl: true, ico: <T><path d="M2 16h14M2 16 13 3" stroke="#333" strokeWidth="1.4" /></T> },
  { w: 39, hl: true, caret: true, ico: <T><rect x="3" y="4" width="12" height="13" stroke="#333" strokeWidth="1.2" /><rect x="3" y="1" width="5" height="5" fill="#fff" stroke="#333" /></T> },
  { w: 23, ico: <T><path d="M2 4h14M2 9h9M2 14h12" stroke={ST} strokeWidth="2.6" /></T> },
  { w: 22, hl: true, ico: <CheckerBox /> },
  { w: 23, ico: <T><rect x="7" y="6" width="9" height="12" fill="#55b878" /><path d="M2 3h5M4.5 1v5" stroke={ST} /></T> },
  { w: 39, caret: true, ico: <T><path d="M4 6h9v9H4ZM4 6l4-4h9v9l-4 4M13 6l4-4" stroke={ST} /><rect x="1" y="13" width="4" height="4" stroke="#e8761a" /></T> },
  { w: 24, ico: <T><path d="M4 2v13h12M1 5l3-3 3 3M13 12l3 3-3 3" stroke={ST} strokeWidth="1.3" /><rect x="8" y="6" width="2" height="2" fill="#1e88e5" /></T> },
  { w: 37, caret: true, ico: <T><path d="M4 5l6-2h5v10l-6 2H4Z" stroke="#1e88e5" strokeDasharray="3 2" /><path d="M4 17V5h11" stroke={ST} /></T> },
  { w: 40, hl: true, caret: true, ico: <T><path d="M9 1 16 5v8l-7 4-7-4V5ZM2 12l7-4 7 4M9 8V1" stroke="#333" /><circle cx="9" cy="9" r="2" fill="#fff" stroke="#333" /></T> },
  { w: 21, hl: true, ico: <T><path d="M9 2l2 7 5 7-7-4-6 4 4-7Z" fill="#444" /><circle cx="14" cy="4" r="2.4" stroke="#444" /></T> },
  { w: 22, ico: <T><path d="M8 2l2 7 5 7-7-4-6 4 4-7Z" fill={ST} /><path d="M13 3l4 3M17 2l-4 3" stroke={ST} /></T> },
  { w: 23, ico: <T><path d="M9 2l2 7 5 7-7-4-6 4 4-7Z" fill={ST} /></T> },
  { w: 73, scale: true },
  { w: 38, caret: true, ico: <Settings size={19} color={ST} fill={ST} strokeWidth={1.8} /> },
  { w: 25, ico: <T><path d="M9 1v16M1 9h16" stroke={ST} strokeWidth="1.6" /></T> },
  { w: 97, units: true },
  { w: 25, ico: <T><rect x="3" y="1" width="12" height="16" rx="1" stroke={ST} strokeWidth="1.3" /><path d="M6 5h1M9 5h4M6 9h1M9 9h4M6 13h1M9 13h4" stroke={ST} /></T> },
  { w: 22, hl: true, ico: <T><rect x="2" y="2" width="12" height="14" stroke="#333" strokeWidth="1.4" /><rect x="2" y="2" width="12" height="3" fill="#333" /><rect x="10" y="12" width="4" height="4" fill="#333" /></T> },
  { w: 24, ico: <T><rect x="2" y="3" width="14" height="9" stroke={ST} /><path d="M9 12v4M5 16h8" stroke={ST} /></T> },
  { w: 20, ico: null },
  { w: 22, hl: true, ico: <T><circle cx="9" cy="9" r="7" stroke="#444" strokeWidth="2" /></T> },
  { w: 25, ico: <T><path d="M2 4h12M2 9h12M2 14h12" stroke={ST} strokeWidth="2" /></T> },
];

const rows = [
  { name: "0", kind: "blue", color: "#fff", num: "白", lw: "默认" },
  { name: "01S-COLUMNDIM2", kind: "blue", color: "#fff", num: "白", lw: "默认" },
  { name: "01S-CW-2", kind: "blue", color: "#c8ac66", num: "43", lw: "默认" },
  { name: "A-KZ1", kind: "check", color: "#ff8000", num: "30", lw: "0.09...", sel: true },
  { name: "A-KZ2", kind: "gray", color: "#ffff00", num: "50", lw: "0.09..." },
  { name: "A-KZ3", kind: "gray", color: "#00ffff", num: "130", lw: "0.09..." },
  { name: "A-KZ4", kind: "gray", color: "#ff00ff", num: "210", lw: "0.09..." },
  { name: "A-KZ5", kind: "gray", color: "#ff0000", num: "10", lw: "0.09..." },
];

const panelLabels = ["晓东工具", "V21.0208", "---", "设　置...", "专　业...", "绘制类...", "", "实　体...", "曲　线...", "", "图　层...", "标注一...", "标注二...", "符　号...", "文字一...", "文字二...", "文字三...", "", "表　格...", "排　版...", "布　图...", "", "工具一...", "工具二...", "", "统计一...", "统计二...", "批处理..."];

const menus = [["文件(F)", 55], ["编辑(E)", 117], ["视图(V)", 180], ["插入(I)", 244], ["格式(O)", 304], ["工具(T)", 370], ["绘图(D)", 433], ["标注(N)", 498], ["修改(M)", 564], ["窗口(W)", 632], ["帮助(H)", 700], ["参数(P)", 766]];

/* drawing data, in page coordinates of the left copy */
const tan = "#b39c62";
const tanLow = "#8a7a48";
const labels = [
  { t: "A-KZ2", x: 596, y: 443, on: "#d0d000" },
  { t: "A-KZ3", x: 403, y: 481, on: "#00b8c4" },
  { t: "A-KZ2", x: 245, y: 510, on: "#d0d000" },
  { t: "A-KZ1", x: 37, y: 551, on: "#d87800", w: 61 },
  { t: "A-KZ4", x: 48, y: 660, on: "#c000c0" },
  { t: "A-KZ5", x: 256, y: 661, on: "#c80000" },
  { t: "A-KZ3", x: 458, y: 661, on: "#00b8c4" },
  { t: "A-KZ4", x: 628, y: 661, on: "#c000c0" },
];
const squares = [
  { p: "633,448 655,444 660,467 637,472", on: "#e0e000", c: tan },
  { p: "447,488 466,484 470,502 452,506", on: "#00c0cc", c: tan },
  { p: "292,514 316,509 320,532 297,537", on: "#e0e000", c: tan },
  { p: "85,555 103,551 107,570 88,573", on: "#d87000", c: tan },
  { p: "88,666 106.5,666 106.5,685 88,685", on: "#a800a8", c: tanLow },
  { p: "295,666 314,666 314,685 295,685", on: "#a00000", c: tanLow },
  { p: "503,666 522,666 522,685 503,685", on: "#00a8b0", c: tanLow },
  { p: "674,666 693,666 693,685 674,685", on: "#a800a8", c: tanLow },
];

export default function App() {
  return (
    <Page>
      <GlobalStyle />
      <TopBar>
        <Logo>
          <svg width="40" height="40" viewBox="0 0 40 40">
            <path d="M5 37 17 5h7l5 32h-7l-1-7h-8l-3 7Zm10-13h5l-1-10Z" fill="#c8201e" />
          </svg>
          <LogoCaret />
        </Logo>
        <TopStack>
          <QuickRow>
            <QuickIcon><File size={18} strokeWidth={1.6} /></QuickIcon>
            <QuickIcon><FolderOpen size={18} strokeWidth={1.6} /></QuickIcon>
            <QuickIcon><Save size={18} strokeWidth={1.8} /></QuickIcon>
            <QuickIcon><Save size={18} strokeWidth={1.8} color="#444" /></QuickIcon>
            <QuickIcon><Printer size={18} strokeWidth={1.6} /></QuickIcon>
            <QuickIcon $w={20}><Undo2 size={17} strokeWidth={1.6} /></QuickIcon>
            <MiniCaret />
            <QuickIcon $w={20}><Redo2 size={17} strokeWidth={1.4} color="#aaa" /></QuickIcon>
            <MiniCaret />
            <WorkspaceBox>
              <Settings size={15} strokeWidth={1.5} color="#555" />
              <span>经典空间</span>
              <MiniCaret />
            </WorkspaceBox>
            <MiniCaret />
            <AppTitle>AutoCAD2020 + MSteel V20200320&nbsp;&nbsp;&nbsp;&nbsp;Drawing1.dwg</AppTitle>
            <WinButtons><span>_</span><span>❐</span><span>✕</span></WinButtons>
          </QuickRow>
          <MenuRow>
            {menus.map(([m, x]) => <MenuItem key={m} $x={x}>{m}</MenuItem>)}
            <WinButtons $low><span>_</span><span>❐</span><span>✕</span></WinButtons>
          </MenuRow>
        </TopStack>
      </TopBar>

      <ScaleRow>
        <ScaleBox>
          <span>钢结构</span>
          <ScaleText>【出图比例 1:100】</ScaleText>
          <ScaleText $gap>【绘图比例 1:100】</ScaleText>
        </ScaleBox>
      </ScaleRow>

      <TabRow><StartTab>开始</StartTab></TabRow>

      <PropsRow>
        <PropIconLeft>
          <I><rect x="1" y="2" width="8" height="4" stroke="#555" /><path d="M1 8h8M1 11h8M1 14h8" stroke="#555" /><path d="M12 10v6M9 13h6" stroke="#555" /></I>
        </PropIconLeft>
        <Bulb />
        <PropCombo $w={29} $ml={652}><Caret /></PropCombo>
        <PropCombo $w={123} $ml={8}>
          <LineSample />
          <PropText>ByLayer</PropText>
          <Caret />
        </PropCombo>
        <PropCombo $w={124} $ml={2} $off>
          <PropText $off $pad={9}>ByColor</PropText>
          <Caret />
        </PropCombo>
        <PropTool><I><text x="8" y="13" textAnchor="middle" fontSize="15" fill="#444" fontFamily="Liberation Sans">A</text><path d="M12 17l4-5" stroke="#a05a1e" strokeWidth="1.6" /></I></PropTool>
        <PropCombo $w={119}><PropText $pad={18}>Standard</PropText><Caret /></PropCombo>
        <PropTool $ml={1}><I><path d="M2 6v10M14 6v10M2 11h12" stroke="#555" /><path d="M9 12l5-9" stroke="#a05a1e" strokeWidth="1.6" /></I></PropTool>
        <PropCombo $w={119}><PropText $pad={18}>ISO-25</PropText><Caret /></PropCombo>
        <PropTool $ml={2}><I><rect x="2" y="2" width="13" height="14" stroke="#555" /><path d="M2 6h13M2 10h13M2 13h13M7 6v10M11 6v10" stroke="#555" /></I></PropTool>
        <PropCombo $w={117}><PropText $pad={0}>Standard</PropText><Caret /></PropCombo>
        <PropTool $ml={3}><I><path d="M2 16 6 6l9 3-3 7Z" stroke="#555" strokeDasharray="2 1" /><circle cx="12" cy="5" r="3" stroke="#a05a1e" /></I></PropTool>
        <PropCombo $w={118}><PropText $pad={13}>Standard</PropText><Caret /></PropCombo>
      </PropsRow>

      <Main>
        <LeftTools>
          {leftIcons.map((ic, i) => <LeftCell key={i}><I s={18}>{ic}</I></LeftCell>)}
        </LeftTools>

        <Canvas>
          <CanvasTag>[−]</CanvasTag>
          <DrawingSvg viewBox="29 131 1786 847">
            {labels.map((l, i) => (
              <g key={i} fontFamily="Roboto" fontWeight="100" fontSize="24" strokeWidth="0.55">
                <text x={l.x} y={l.y} fill="#00b800" stroke="#00b800" textLength={l.w || 65} lengthAdjust="spacingAndGlyphs">{l.t}</text>
                <text x={l.x + 1113} y={l.y} fill={l.on} stroke={l.on} textLength={l.w || 65} lengthAdjust="spacingAndGlyphs">{l.t}</text>
              </g>
            ))}
            {squares.map((s, i) => (
              <g key={i} fill="none" strokeWidth="1.2">
                <polygon points={s.p} stroke={s.c} />
                <polygon points={s.p} stroke={s.on} transform="translate(1113 0)" />
              </g>
            ))}
            <g stroke="#d8d8d8" fill="none" strokeWidth="1">
              <path d="M49.5 909v50.5H100" />
              <rect x="45.5" y="954.5" width="9" height="9" />
              <path d="M51 892l6.5 7 6.5-7M57.5 899v6.5" />
              <path d="M104 945l13 13M117 945l-13 13" />
            </g>
            <path d="M1811.5 131v847" stroke="#d8d8d8" />
          </DrawingSvg>

          <Compass>
            <Ring />
            <ViewCube><ViewFace><I s={26}><path d="M1 24h24M13 4v20" stroke="#444" strokeWidth="2" /><path d="M15 11h6M17 21h6" stroke="#333" /></I></ViewFace></ViewCube>
            <Dir $x={52} $y={0}>北</Dir>
            <Dir $x={52} $y={113}>南</Dir>
            <Dir $x={-5} $y={54}>西</Dir>
            <Dir $x={107} $y={54}>东</Dir>
            <WcsPill>WCS <ChevronDown size={10} /></WcsPill>
          </Compass>

          <NavBar>
            <NavGlyph><I s={26}><circle cx="9" cy="9" r="6" stroke="#555" strokeWidth="1.5" /><rect x="1" y="1" width="16" height="16" rx="4" stroke="#555" /></I></NavGlyph>
            <NavGlyph><Hand size={26} color="#555" strokeWidth={1.3} /></NavGlyph>
            <NavGlyph><I s={26}><path d="M2 2l14 14M16 2 2 16" stroke="#555" /><circle cx="12" cy="12" r="3" stroke="#555" /></I></NavGlyph>
            <NavGlyph><I s={26}><path d="M9 1v16M7 4l2-3 2 3M1 10c3 3 13 3 16 0-3-3-13-3-16 0Z" stroke="#555" /></I></NavGlyph>
            <NavGlyph><I s={26}><rect x="1" y="1" width="4" height="4" stroke="#555" /><rect x="7" y="1" width="4" height="4" stroke="#555" /><rect x="13" y="1" width="4" height="4" stroke="#555" /><rect x="1" y="7" width="16" height="10" stroke="#555" /><path d="M6 9v6l6-3Z" fill="#555" /></I></NavGlyph>
          </NavBar>

          <HistoryStack>
            <HistoryLine>命令: *取消*</HistoryLine>
            <HistoryLine>命令: 指定对角点或 [栏选(F)/圈围(WP)/圈交(CP)]: *取消*</HistoryLine>
          </HistoryStack>
          <CommandBar>
            <Grip />
            <X size={14} color="#555" strokeWidth={2.4} />
            <Wrench size={15} color="#666" strokeWidth={1.4} />
            <ConsoleBox>&gt;_</ConsoleBox>
            <CmdCaret />
            <CmdHint>键入命令</CmdHint>
            <UpCaret />
          </CommandBar>
          <CanvasCorner />
        </Canvas>

        <RightPanel>
          <RightTools>
            <RightBar $pt={9} $pb={0}>{rightIconsA.map((ic, i) => <RightCell key={i}><I s={17}>{ic}</I></RightCell>)}</RightBar>
            <RightBar $pt={6} $pb={1} $mt={2}>
              {rightIconsB.map((ic, i) => <RightCell key={i}>{ic ? <I s={17}>{ic}</I> : moreIcons[i]}</RightCell>)}
            </RightBar>
          </RightTools>
          <LabelColumn>
            {panelLabels.map((l, i) => l === "---" ? <LabelRule key={i} /> : <PanelLabel key={i}>{l}</PanelLabel>)}
          </LabelColumn>
        </RightPanel>
      </Main>

      <BottomBar>
        <IconGroup $first $pl={7}>{group1.map((g, i) => <BarCell key={i}>{g}</BarCell>)}</IconGroup>
        <IconGroup $pl={7}>{group2.map((g, i) => <BarCell key={i}>{g}</BarCell>)}</IconGroup>
        <IconGroup $pl={6}>{group3.map((g, i) => <BarCell key={i}>{g}</BarCell>)}</IconGroup>
        <IconGroup $pl={8}>{group4.map((g, i) => <BarCell key={i}>{g}</BarCell>)}</IconGroup>
        <IconGroup $pl={9}>
          {group5.map((g, i) => <BarCell key={i}>{g}</BarCell>)}
          <BarDivider $m={3} />
          <BarCell>{redHouse(<path d="M11 7c1-3 4-4 6-3M14 2l3 2-3 2" stroke="#1c3fe0" strokeWidth="1.4" />)}</BarCell>
          <BarDivider $m={1} />
          <BarCell>{redHouse(<path d="M17 7c-1-3-4-4-6-3M14 2l-3 2 3 2" stroke="#1c3fe0" strokeWidth="1.4" />)}</BarCell>
          {group6.map((g, i) => <BarCell key={i}>{g}</BarCell>)}
        </IconGroup>
      </BottomBar>

      <StatusBar>
        <Tabs>
          <LayoutTab $active>模型</LayoutTab>
          <LayoutTab>布局1</LayoutTab>
          <LayoutTab>布局2</LayoutTab>
          <AddTab>+</AddTab>
        </Tabs>
        <CoordTile>76817.7562, -12672.9555, 0.0000</CoordTile>
        <TileRow>
          {tiles.map((t, i) => (
            <Tile key={i} $w={t.w} $hl={t.hl}>
              {t.label}
              {t.ico}
              {t.scale && <ScaleLabel>1:1 / 100%</ScaleLabel>}
              {t.units && <><I><path d="M5 1v16M5 2h7v14H5M8 5h4M8 8h4M8 11h4M8 14h4" stroke="#555" strokeWidth="1.4" /></I><UnitsLabel>小数</UnitsLabel></>}
              {(t.caret || t.scale || t.units) && <TileCaret />}
            </Tile>
          ))}
        </TileRow>
      </StatusBar>
      <Baseline />

      <Dialog>
        <DialogStrip>
          <StripIcon><X size={13} strokeWidth={3.4} /></StripIcon>
          <StripIcon><I s={12}><path d="M3 2v14M15 2v14M3 9l10-5v10Z" fill="#666" stroke="#666" /></I></StripIcon>
          <StripIcon><Settings size={13} strokeWidth={3} /></StripIcon>
          <StripTitle>图层特性管理器</StripTitle>
          <StripIcon $end><I s={17}><path d="M2 7l8-4 6 3-8 4ZM2 10l6 3 8-4M2 13l6 3 8-4" stroke="#666" strokeWidth="1.3" /></I></StripIcon>
        </DialogStrip>
        <DialogBody>
          <DialogHead>
            <CurrentLayer>当前图层: A-KZ1</CurrentLayer>
            <SearchBox>
              <span>搜索图层</span>
              <Search size={15} color="#666" strokeWidth={1.5} />
            </SearchBox>
          </DialogHead>
          <DialogTools>
            <ToolGlyph $w={23}><I s={15}><rect x="2" y="5" width="13" height="11" fill="#bbb" stroke="#777" /><path d="M2 5h5l1-2h6v2" stroke="#777" /><rect x="6" y="8" width="5" height="4" fill="#eee" /></I></ToolGlyph>
            <ToolGlyph $w={23}><I s={15}><rect x="2" y="5" width="13" height="11" fill="#aaa" stroke="#777" /><path d="M2 5h5l1-2h6v2" stroke="#777" /></I></ToolGlyph>
            <ToolSep />
            <ToolGlyph $w={24}><I s={16}><path d="M1 8l6-5 8 1-6 5Z" fill="#fff" stroke="#666" /><path d="M1 11l8 1M1 14l8 1" stroke="#666" /><rect x="9" y="7" width="7" height="10" fill="#fff" stroke="#666" /><circle cx="13" cy="12" r="1.4" fill="#2a77c9" /></I></ToolGlyph>
            <ToolSpacer />
            {[
              <circle cx="13" cy="9" r="3.4" fill="#f59b23" />,
              <path d="M13 5v8M9 9h8M10 6l6 6M16 6l-6 6" stroke="#3fb3e0" />,
              <path d="M10 6l6 7M16 6l-6 7" stroke="#e01010" strokeWidth="2" />,
              <path d="M9 9l3 4 5-9" stroke="#1a9a30" strokeWidth="2.2" />,
            ].map((m, i) => (
              <ToolGlyph $w={23} key={i}><I s={18}><path d="M1 6h9l-3 5H1Z" fill="#fff" stroke="#666" /><path d="M1 13h7M1 16h7" stroke="#666" />{m}</I></ToolGlyph>
            ))}
            <ToolRight>
              <RefreshCw size={14} strokeWidth={3} color="#666" />
              <I s={17}><path d="M2 2h9v9H2ZM2 16l5-5h9l-5 5Z" stroke="#999" /></I>
              <Settings size={16} strokeWidth={3} color="#666" />
            </ToolRight>
          </DialogTools>

          <Panels>
            <FilterPanel>
              <FilterHead>过滤器<ChevronsLeft size={13} color="#777" /></FilterHead>
              <FilterTree>
                <TreeRow>
                  <TreeBox>−</TreeBox>
                  <I s={18}><path d="M6 6l6-4 5 2-6 4Z" fill="#fff" stroke="#555" /><path d="M6 9l5 2 6-4" stroke="#555" /><path d="M3 11l3 5 6-8" stroke="#2a9a20" strokeWidth="2.2" /></I>
                  <TreeSel>全部</TreeSel>
                </TreeRow>
                <TreeChild>
                  <I s={13}><rect x="2" y="5" width="13" height="11" fill="#c0c0c0" stroke="#999" /><rect x="6" y="8" width="5" height="4" fill="#eee" /></I>
                  <span>所有使用的图层</span>
                </TreeChild>
              </FilterTree>
              <MiniScroll>
                <ChevronLeft size={13} strokeWidth={2.6} />
                <MiniThumb />
                <ChevronRight size={13} strokeWidth={2.6} />
              </MiniScroll>
              <InvertRow>
                <InvertBox />
                <span>反转过</span>
                <ChevronsLeft size={13} color="#777" />
              </InvertRow>
            </FilterPanel>

            <TablePanel>
              <HeadRow>
                <HeadCell>状</HeadCell>
                <HeadCell>名称<SortMark /></HeadCell>
                <HeadCell>开</HeadCell>
                <HeadCell>冻</HeadCell>
                <HeadCell>锁</HeadCell>
                <HeadCell>打</HeadCell>
                <HeadCell>颜色</HeadCell>
                <HeadCell>线型</HeadCell>
                <HeadCell>线宽</HeadCell>
                <HeadCell>透明度</HeadCell>
                <HeadCell>新</HeadCell>
                <HeadCell $last>说明</HeadCell>
              </HeadRow>
              {rows.map((r) => (
                <LayerRow key={r.name} $sel={r.sel}>
                  <Cell $c>
                    {r.kind === "check"
                      ? <Check size={18} color="#3a8a2a" strokeWidth={3} />
                      : <I s={16}><path d="M1 13 5 5h11l-4 8Z" fill={r.kind === "blue" ? "#2a77c9" : "none"} stroke={r.kind === "blue" ? "#154c8c" : "#999"} /></I>}
                  </Cell>
                  <NameCell>{r.name}</NameCell>
                  <Cell $c><I s={16}><path d="M9 1c3 0 4 3 3 6l-1 4v4H7v-4L6 7C5 4 6 1 9 1Z" fill="#fbf3b0" stroke="#555" /></I></Cell>
                  <Cell $c><I s={17}><circle cx="9" cy="9" r="4" fill="#f9efb0" stroke="#776" /><path d="M9 1v3M9 14v3M1 9h3M14 9h3M3 3l2 2M13 13l2 2M15 3l-2 2M5 13l-2 2" stroke="#776" /></I></Cell>
                  <Cell $c><I s={17}><rect x="2" y="8" width="9" height="9" fill="#e8d8a8" stroke="#5a4a20" strokeWidth="1.3" /><path d="M9 8V4a3 3 0 0 1 6 0v3" stroke="#5a4a20" strokeWidth="1.3" /></I></Cell>
                  <Cell $c><I s={15}><rect x="2" y="6" width="14" height="7" rx="1.5" fill="#eee" stroke="#444" strokeWidth="1.4" /><path d="M5 6V2h8v4M5 11v5h8v-5" stroke="#444" strokeWidth="1.4" /></I></Cell>
                  <ColorCell><Swatch $c={r.color} />{r.num}</ColorCell>
                  <TextCell>Continu...</TextCell>
                  <WidthCell><WidthLine />{r.lw}</WidthCell>
                  <TextCell>0</TextCell>
                  <Cell $c><I s={16}><rect x="1" y="1" width="9" height="10" fill="#fff" stroke="#555" /><rect x="3" y="3" width="9" height="10" fill="#eee" stroke="#555" /><circle cx="12" cy="12" r="3.6" fill="#f7b32b" stroke="#d88" strokeWidth=".5" /></I></Cell>
                  <Cell />
                </LayerRow>
              ))}
              <NameDivider />
              <MainScroll>
                <ChevronLeft size={13} strokeWidth={2.6} />
                <MainThumb />
                <ChevronRight size={13} strokeWidth={2.6} />
              </MainScroll>
            </TablePanel>
          </Panels>

          <FootText>全部: 显示了 8 个图层，共 8 个图层</FootText>
        </DialogBody>
        <RowsMarker />
      </Dialog>

      <Annotations viewBox="0 0 1912 1042">
        <rect x="30" y="411" width="702" height="318" fill="none" stroke={RED} strokeWidth="10" rx="3" />
        <rect x="1114" y="387" width="701" height="342" fill="none" stroke={RED} strokeWidth="10" rx="3" />
        <polygon points="677,220 678,218 1096,446 1101,440 1112,460 1090,458 1094,453" fill={RED} />
        <polygon points="754,575.5 1080,574 1080,569 1102,577 1080,585 1080,579 754,577" fill={RED} />
      </Annotations>
      <Caption $x={253} $y={768}>原始图形</Caption>
      <Caption $x={1402} $y={761}>最终效果</Caption>

      <ImeBar>
        <SogouMark>S</SogouMark>
        <ImeText>英</ImeText>
        <ImeText $small>•,</ImeText>
        <Smile size={18} strokeWidth={2} />
        <Mic size={18} strokeWidth={2.2} />
        <User size={18} strokeWidth={2.4} />
        <LayoutGrid size={15} fill="#1a73c8" strokeWidth={1} />
      </ImeBar>
      <Watermark>Discuz!</Watermark>
    </Page>
  );
}
